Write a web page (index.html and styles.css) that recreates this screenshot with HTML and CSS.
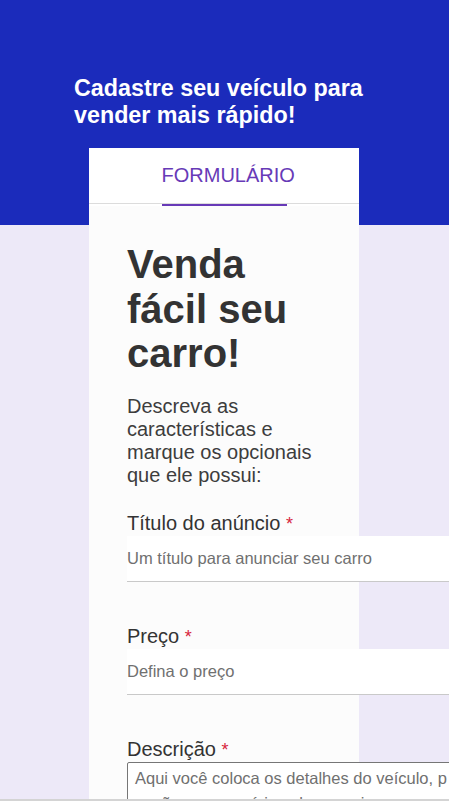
FILE: index.html
```html
<!DOCTYPE html>
<html lang="pt-BR">
<head>
<meta charset="utf-8">
<title>Cadastre seu veículo</title>
<link rel="stylesheet" href="styles.css">
</head>
<body>
<div class="page">
  <h1 class="hero-title">Cadastre seu veículo para vender mais rápido!</h1>
  <div class="card">
    <div class="tabbar">
      <div class="tab">FORMULÁRIO</div>
    </div>
    <div class="card-body">
      <h2 class="title">Venda fácil seu carro!</h2>
      <p class="lead">Descreva as características e marque os opcionais que ele possui:</p>
      <div class="field">
        <label class="label">Título do anúncio <span class="req">*</span></label>
        <input class="input" type="text" placeholder="Um título para anunciar seu carro">
      </div>
      <div class="field">
        <label class="label">Preço <span class="req">*</span></label>
        <input class="input" type="text" placeholder="Defina o preço">
      </div>
      <div class="field">
        <label class="label">Descrição <span class="req">*</span></label>
        <textarea class="textarea" rows="4" placeholder="Aqui você coloca os detalhes do veículo, p de que opções e acessórios ele possui"></textarea>
      </div>
    </div>
  </div>
</div>
<div class="bottom-edge"></div>
</body>
</html>
```
FILE: styles.css
```css
html, body {
  margin: 0;
  padding: 0;
  overflow-x: hidden;
}
body {
  font-family: "Liberation Sans", Arial, sans-serif;
  background: #ede9f8;
}
.page {
  min-height: 801px;
  background: linear-gradient(#1b2bbb 0, #1b2bbb 225px, #ede9f8 225px);
  padding-top: 75px;
}
.hero-title {
  margin: 0 0 19px 74px;
  width: 320px;
  font-size: 23.3px;
  line-height: 27px;
  font-weight: bold;
  color: #ffffff;
}
.card {
  margin-left: 89px;
  width: 270px;
  min-height: 700px;
  background: #fcfcfc;
}
.tabbar {
  display: flex;
  justify-content: center;
  background: #ffffff linear-gradient(#dcdcdc, #dcdcdc) no-repeat 0 55px / 100% 1px;
}
.tab {
  width: 125px;
  white-space: nowrap;
  padding: 16px 0 17px;
  font-size: 20px;
  line-height: 23px;
  color: #673ab7;
  border-bottom: 2px solid #673ab7;
}
.card-body {
  padding: 36px 38px 0;
  width: 194px;
}
.title {
  margin: 0;
  font-size: 40px;
  line-height: 44.5px;
  font-weight: bold;
  color: #333333;
}
.lead {
  margin: 19px 0 0;
  font-size: 20px;
  line-height: 23px;
  color: #3d3d3d;
}
.field {
  margin-top: 25px;
}
.field + .field {
  margin-top: 43px;
}
.label {
  display: block;
  font-size: 20px;
  line-height: 23px;
  color: #333333;
}
.req {
  color: #d7263d;
  font-size: 18px;
}
.input {
  display: block;
  box-sizing: border-box;
  width: 420px;
  height: 46px;
  margin: 0;
  padding: 0;
  border: 0;
  border-bottom: 1px solid #c9c9c9;
  background: #ffffff;
  font-family: "Liberation Sans", Arial, sans-serif;
  font-size: 16.5px;
  color: #333;
  outline: none;
}
.input::placeholder,
.textarea::placeholder {
  color: #707070;
  opacity: 1;
}
.textarea {
  display: block;
  box-sizing: border-box;
  width: 420px;
  margin: 0;
  padding: 3px 7px;
  border: 1px solid #767676;
  border-radius: 2px;
  background: #ffffff;
  font-family: "Liberation Sans", Arial, sans-serif;
  font-size: 16.5px;
  line-height: 25px;
  resize: none;
}
.bottom-edge {
  position: fixed;
  left: 0;
  right: 0;
  bottom: 0;
  height: 2px;
  background: #d4d4d4;
}
```
